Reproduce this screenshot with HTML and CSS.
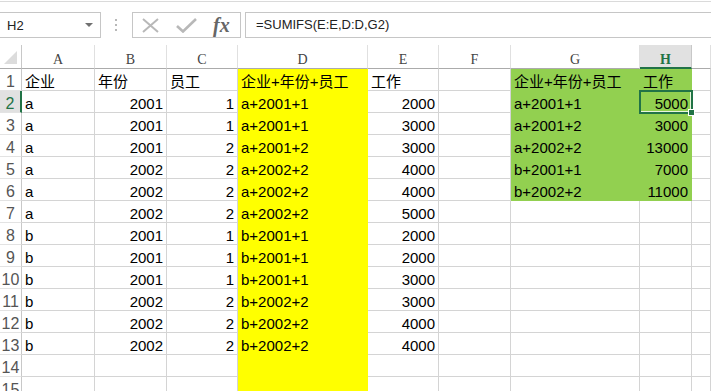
FILE: index.html
```html
<!DOCTYPE html>
<html>
<head>
  <title>SUMIFS</title>
  <meta charset="utf-8">
  <link rel="stylesheet" href="styles.css">
</head>
<body>
  <div class="toolbar">
    <div class="name-box">
      <span>H2</span>
      <svg class="caret" width="8" height="5" viewBox="0 0 8 5"><path d="M0 0 L8 0 L4 4 Z" fill="#707070"/></svg>
    </div>
    <svg class="grip" width="4" height="14" viewBox="0 0 4 14">
      <circle cx="2" cy="2" r="1" fill="#a0a0a0"/>
      <circle cx="2" cy="7" r="1" fill="#a0a0a0"/>
      <circle cx="2" cy="12" r="1" fill="#a0a0a0"/>
    </svg>
    <div class="buttons">
      <svg width="19" height="15" viewBox="0 0 19 15"><path d="M2 1 L17 14 M17 1 L2 14" stroke="#b8b8b8" stroke-width="2" fill="none"/></svg>
      <svg width="21" height="15" viewBox="0 0 21 15"><path d="M1 8 L7 13.5 L20 1" stroke="#b8b8b8" stroke-width="2.6" fill="none"/></svg>
      <span class="fx">fx</span>
    </div>
    <div class="formula">=SUMIFS(E:E,D:D,G2)</div>
  </div>

  <div class="sheet" id="sheet">
    <div class="corner"><div class="tri"></div></div>
  </div>

  <script>
    var letters = ['A', 'B', 'C', 'D', 'E', 'F', 'G', 'H', ''];
    var rows = [
      ['企业', '年份', '员工', '企业+年份+员工', '工作', '', '企业+年份+员工', '工作'],
      ['a', '2001', '1', 'a+2001+1', '2000', '', 'a+2001+1', '5000'],
      ['a', '2001', '1', 'a+2001+1', '3000', '', 'a+2001+2', '3000'],
      ['a', '2001', '2', 'a+2001+2', '3000', '', 'a+2002+2', '13000'],
      ['a', '2002', '2', 'a+2002+2', '4000', '', 'b+2001+1', '7000'],
      ['a', '2002', '2', 'a+2002+2', '4000', '', 'b+2002+2', '11000'],
      ['a', '2002', '2', 'a+2002+2', '5000', '', '', ''],
      ['b', '2001', '1', 'b+2001+1', '2000', '', '', ''],
      ['b', '2001', '1', 'b+2001+1', '2000', '', '', ''],
      ['b', '2001', '1', 'b+2001+1', '3000', '', '', ''],
      ['b', '2002', '2', 'b+2002+2', '3000', '', '', ''],
      ['b', '2002', '2', 'b+2002+2', '4000', '', '', ''],
      ['b', '2002', '2', 'b+2002+2', '4000', '', '', ''],
      ['', '', '', '', '', '', '', ''],
      ['', '', '', '', '', '', '', '']
    ];

    var sheet = document.getElementById('sheet');

    function add(cls, text) {
      var el = document.createElement('div');
      el.className = cls;
      el.textContent = text;
      sheet.appendChild(el);
      return el;
    }

    letters.forEach(function (l, i) {
      add(i === 7 ? 'col-head active' : 'col-head', l);
    });

    rows.forEach(function (row, r) {
      add(r === 1 ? 'row-head active' : 'row-head', r + 1);
      row.concat(['']).forEach(function (val, c) {
        var cls = 'cell';
        if (/^\d+$/.test(val)) cls += ' num';
        if (c === 3) cls += ' yellow';
        if ((c === 6 || c === 7) && r < 6) cls += ' green';
        if (c === 7 && r === 1) cls += ' selected';
        add(cls, val);
      });
    });
  </script>
</body>
</html>
```

FILE: styles.css
```css
html, body {
  margin: 0;
  overflow: hidden;
  background: #fff;
}
body {
  font-family: 'Liberation Sans', 'Noto Sans CJK SC', sans-serif;
  color: #000;
}
.toolbar {
  display: flex;
  align-items: stretch;
  margin-top: 1px;
  border-top: 1px solid #dadada;
  padding: 10px 0 7px;
  height: 26px;
}
.name-box {
  display: flex;
  align-items: center;
  justify-content: space-between;
  box-sizing: border-box;
  width: 102px;
  margin-left: -1px;
  padding: 0 7px 0 7px;
  border: 1px solid #c6c6c6;
  font-size: 13px;
  color: #222;
}
.grip {
  align-self: center;
  margin: 0 14px 0 13px;
}
.buttons {
  display: flex;
  align-items: center;
  box-sizing: border-box;
  width: 109px;
  padding: 0 8px 0 8px;
  gap: 16px;
  border: 1px solid #c6c6c6;
}
.fx {
  font-family: 'Liberation Serif', serif;
  font-style: italic;
  font-weight: bold;
  font-size: 20px;
  color: #666;
  line-height: 20px;
}
.formula {
  flex: 1;
  margin-left: 4px;
  border: 1px solid #c6c6c6;
  border-right: none;
  padding-left: 10px;
  font-size: 13px;
  line-height: 24px;
  color: #222;
}
.sheet {
  display: grid;
  grid-template-columns: 22px 73px 72px 71px 130px 71px 72px 129px 52px 1fr;
  grid-template-rows: 24px;
  grid-auto-rows: 22px;
}
.corner {
  display: flex;
  justify-content: flex-end;
  align-items: flex-end;
  box-sizing: border-box;
  padding: 0 4px 4px 0;
  border-right: 1px solid #c8c8c8;
  border-bottom: 1px solid #ababab;
}
.tri {
  width: 0;
  height: 0;
  border-left: 13px solid transparent;
  border-bottom: 13px solid #dcdcdc;
}
.col-head {
  box-sizing: border-box;
  padding-top: 5px;
  border-right: 1px solid #e0e0e0;
  border-bottom: 1px solid #ababab;
  text-align: center;
  font-family: 'Liberation Serif', serif;
  font-size: 14px;
  line-height: 19px;
  color: #444;
}
.col-head.active {
  background: #e1e1e1;
  color: #217346;
  font-weight: bold;
  border-bottom: 2px solid #217346;
  border-right-color: #c8c8c8;
}
.row-head {
  box-sizing: border-box;
  padding-top: 3px;
  border-right: 1px solid #c8c8c8;
  border-bottom: 1px solid #e3e3e3;
  text-align: center;
  font-size: 16px;
  line-height: 20px;
  color: #555;
}
.row-head.active {
  background: #e1e1e1;
  color: #217346;
  border-right: 2px solid #217346;
}
.cell {
  box-sizing: border-box;
  padding: 3px 3px 0 3px;
  border-right: 1px solid #d4d4d4;
  border-bottom: 1px solid #d4d4d4;
  font-size: 15px;
  line-height: 20px;
  white-space: nowrap;
  overflow: hidden;
}
.num {
  text-align: right;
}
.yellow {
  background: #ffff00;
  border-color: #ffff00;
}
.green {
  background: #92d050;
  border-color: #92d050;
}
.selected {
  position: relative;
  z-index: 1;
  overflow: visible;
  outline: 2px solid #217346;
  outline-offset: -1px;
  box-shadow: inset 0 0 0 1px #e8f5dc;
}
.selected:after {
  content: "";
  position: absolute;
  right: -4px;
  bottom: -4px;
  width: 5px;
  height: 5px;
  background: #217346;
  border: 1px solid #fff;
}
```
